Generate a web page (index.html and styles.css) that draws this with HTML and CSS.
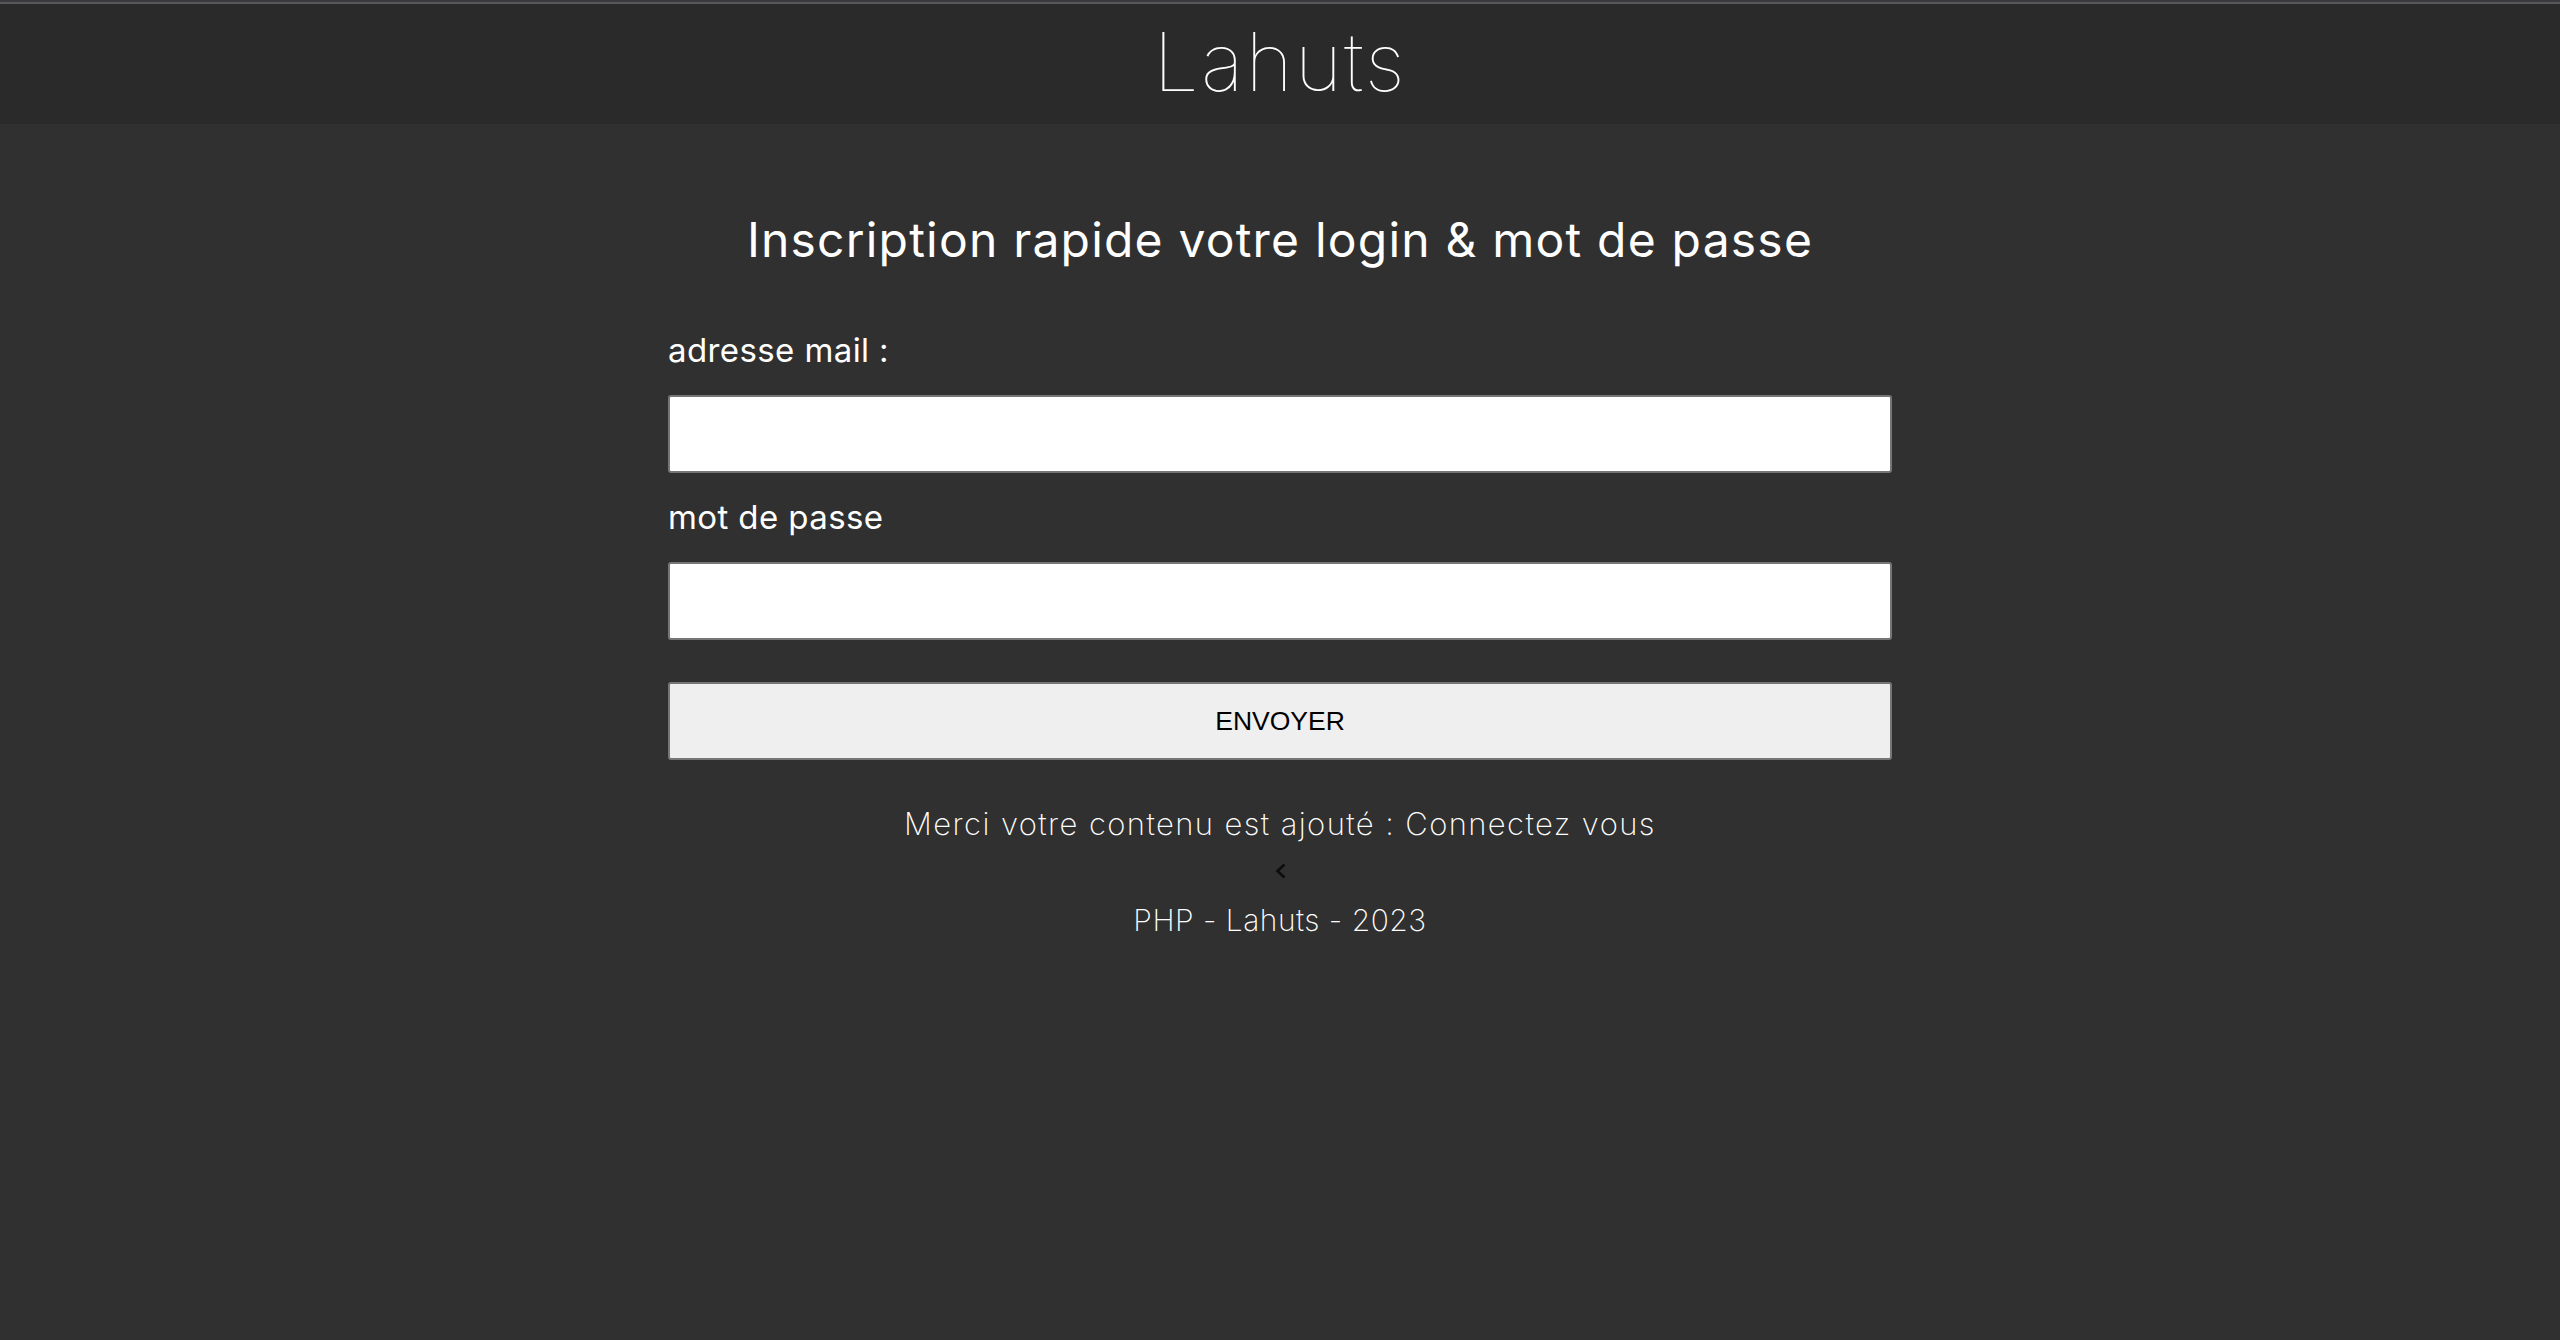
FILE: index.html
```html
<!DOCTYPE html>
<html lang="fr">
<head>
<meta charset="utf-8">
<title>Lahuts - Inscription</title>
<link rel="stylesheet" href="styles.css">
</head>
<body>
<div class="top-strip"></div>
<header class="site-header">
  <h1 class="brand">Lahuts</h1>
</header>
<main class="register">
  <h2 class="register-title">Inscription rapide votre login &amp; mot de passe</h2>
  <form class="register-form" action="#" method="post">
    <label class="field-label" for="mail">adresse mail :</label>
    <input class="field-input" type="email" id="mail" name="mail">
    <label class="field-label" for="pass">mot de passe</label>
    <input class="field-input" type="password" id="pass" name="pass">
    <button class="submit-btn" type="submit">ENVOYER</button>
  </form>
  <p class="notice">Merci votre contenu est ajouté : Connectez vous</p>
  <div class="back-row">
    <a class="back-link" href="#" aria-label="retour">
      <svg width="13" height="16" viewBox="0 0 13 16"><path d="M10.5 1.5 L3.5 8 L10.5 14.5" fill="none" stroke="#0d0d0d" stroke-width="2.6"/></svg>
    </a>
  </div>
</main>
<footer class="site-footer">
  <p class="footer-text">PHP - Lahuts - 2023</p>
</footer>
</body>
</html>
```
FILE: styles.css
```css
html, body {
  margin: 0;
  padding: 0;
}
body {
  background: #303030;
  color: #ffffff;
  font-family: Inter, "Open Sans", sans-serif;
  min-height: 1340px;
}
.top-strip {
  height: 2px;
  background: #3a3a3c;
}
.site-header {
  height: 122px;
  background: #2a2a2a;
  border-top: 2px solid #57575b;
  box-sizing: border-box;
  display: flex;
  justify-content: center;
}
.brand {
  margin: 0;
  font-size: 81px;
  font-weight: 100;
  line-height: 116px;
  letter-spacing: 2px;
}
.register {
  width: 1224px;
  margin: 0 auto;
}
.register-title {
  margin: 86px 0 0;
  font-size: 48px;
  font-weight: 400;
  line-height: 60px;
  letter-spacing: 1.2px;
  text-align: center;
}
.register-form {
  display: flex;
  flex-direction: column;
  margin-top: 60px;
}
.field-label {
  font-size: 33px;
  line-height: 40px;
  letter-spacing: 0.4px;
  margin-bottom: 25px;
}
.field-input {
  height: 78px;
  box-sizing: border-box;
  border: 2px solid #767676;
  border-radius: 3px;
  background: #ffffff;
  margin: 0 0 24px;
  padding: 0 10px;
  font-size: 26px;
}
.register-form .field-input:last-of-type {
  margin-bottom: 42px;
}
.submit-btn {
  height: 78px;
  box-sizing: border-box;
  border: 2px solid #767676;
  border-radius: 3px;
  background: #efefef;
  color: #000;
  font-family: "Liberation Sans", Arial, sans-serif;
  font-size: 26.5px;
  margin: 0;
}
.notice {
  margin: 46px 0 0;
  font-size: 31px;
  font-weight: 200;
  line-height: 36px;
  letter-spacing: 1.4px;
  text-align: center;
}
.back-row {
  display: flex;
  justify-content: center;
  margin-top: 21px;
}
.back-link {
  display: block;
  height: 16px;
}
.back-link svg {
  display: block;
}
.site-footer {
  margin-top: 23px;
}
.footer-text {
  margin: 0;
  font-size: 30px;
  font-weight: 200;
  line-height: 36px;
  letter-spacing: 0.5px;
  text-align: center;
}
```
